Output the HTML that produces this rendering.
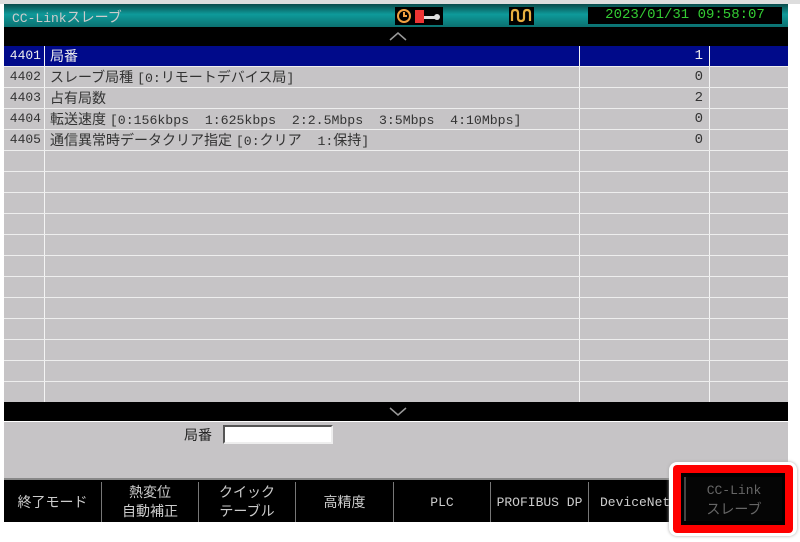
<!DOCTYPE html>
<html><head><meta charset="utf-8"><style>
*{margin:0;padding:0;box-sizing:border-box}
body{width:800px;height:542px;background:#fff;position:relative;overflow:hidden;font-family:"Liberation Sans","Noto Sans CJK JP",sans-serif}
.abs{position:absolute}
.m{font-family:"Liberation Mono",monospace;font-size:13.2px}
#title{left:4px;top:4px;width:784px;height:23px;background:linear-gradient(#0a4a4a,#0e9a9a 45%,#0b7070);}
#title span{position:absolute;left:8px;top:3px;color:#ccc;font-size:14px}
.blk{background:#000}
#dt{left:588px;top:7px;width:194px;height:17px;background:#000;color:#3c3;font-family:"Liberation Mono",monospace;font-size:14px;line-height:17px;text-align:center}
#grid{left:4px;top:46px;width:784px;height:356px;background:#c6c4c6}
.row{position:absolute;left:0;width:784px;height:21px;border-bottom:1px solid #eee;font-size:14px;color:#333;line-height:20px}
.row div{position:absolute;top:0;height:20px;border-right:1px solid #f4f4f4}
.c1{left:0;width:41px;text-align:right;padding-right:3px;font-family:"Liberation Mono",monospace;font-size:13px}
.c2{left:41px;width:535px;padding-left:5px;white-space:nowrap}
.c3{left:576px;width:130px;text-align:right;padding-right:6px;font-family:"Liberation Mono",monospace;font-size:14px}
.sel{background:#000a8a;color:#eee}
#panel{left:4px;top:422px;width:784px;height:56px;background:#c6c4c6}
#btns{left:4px;top:478px;width:784px;height:44px;background:#000;border-top:2px solid #888}
.b{position:absolute;top:2px;height:40px;color:#ccc;font-size:14px;text-align:center;display:flex;align-items:center;justify-content:center;line-height:19px;border-right:1px solid #777}
</style></head><body>
<div class="abs" style="left:0;top:0;width:800px;height:4px;background:#ddd"></div>
<div id="title" class="abs"><span><span class="m" style="position:static;font-size:13px">CC-Link</span>スレーブ</span></div>
<div class="abs blk" style="left:395px;top:7px;width:48px;height:18px"></div>
<svg class="abs" style="left:396px;top:8px" width="48" height="17"><circle cx="8" cy="8" r="6" fill="none" stroke="#f0a040" stroke-width="2"/><path d="M8 4V8H11" stroke="#f0a040" stroke-width="2" fill="none"/><rect x="19" y="2" width="9" height="13" fill="#e33"/><rect x="28" y="8" width="12" height="3" fill="#ddd"/><circle cx="41" cy="9" r="3" fill="#ddd"/></svg>
<div class="abs blk" style="left:509px;top:7px;width:25px;height:18px"></div>
<svg class="abs" style="left:510px;top:8px" width="24" height="16"><path d="M2 13V5Q2 2 5 2Q8 2 8 5V10Q8 13 11 13Q14 13 14 10V5Q14 2 17 2Q20 2 20 5V13" stroke="#e8b040" stroke-width="2.2" fill="none"/></svg>
<div id="dt" class="abs">2023/01/31 09:58:07</div>
<div class="abs blk" style="left:4px;top:27px;width:784px;height:19px"></div>
<svg class="abs" style="left:388px;top:30px" width="20" height="12"><path d="M2 10L10 3L18 10" stroke="#999" stroke-width="1.5" fill="none"/></svg>
<div id="grid" class="abs">
<div class="row sel" style="top:0"><div class="c1">4401</div><div class="c2">局番</div><div class="c3">1</div></div>
<div class="row" style="top:21px"><div class="c1">4402</div><div class="c2">スレーブ局種 <span class="m">[0:</span>リモートデバイス局<span class="m">]</span></div><div class="c3">0</div></div>
<div class="row" style="top:42px"><div class="c1">4403</div><div class="c2">占有局数</div><div class="c3">2</div></div>
<div class="row" style="top:63px"><div class="c1">4404</div><div class="c2">転送速度 <span class="m">[0:156kbps&nbsp;&nbsp;1:625kbps&nbsp;&nbsp;2:2.5Mbps&nbsp;&nbsp;3:5Mbps&nbsp;&nbsp;4:10Mbps]</span></div><div class="c3">0</div></div>
<div class="row" style="top:84px"><div class="c1">4405</div><div class="c2">通信異常時データクリア指定 <span class="m">[0:</span>クリア<span class="m">&nbsp;&nbsp;1:</span>保持<span class="m">]</span></div><div class="c3">0</div></div>
<div class="row" style="top:105px"><div class="c1"></div><div class="c2"></div><div class="c3"></div></div>
<div class="row" style="top:126px"><div class="c1"></div><div class="c2"></div><div class="c3"></div></div>
<div class="row" style="top:147px"><div class="c1"></div><div class="c2"></div><div class="c3"></div></div>
<div class="row" style="top:168px"><div class="c1"></div><div class="c2"></div><div class="c3"></div></div>
<div class="row" style="top:189px"><div class="c1"></div><div class="c2"></div><div class="c3"></div></div>
<div class="row" style="top:210px"><div class="c1"></div><div class="c2"></div><div class="c3"></div></div>
<div class="row" style="top:231px"><div class="c1"></div><div class="c2"></div><div class="c3"></div></div>
<div class="row" style="top:252px"><div class="c1"></div><div class="c2"></div><div class="c3"></div></div>
<div class="row" style="top:273px"><div class="c1"></div><div class="c2"></div><div class="c3"></div></div>
<div class="row" style="top:294px"><div class="c1"></div><div class="c2"></div><div class="c3"></div></div>
<div class="row" style="top:315px"><div class="c1"></div><div class="c2"></div><div class="c3"></div></div>
<div class="row" style="top:336px;border-bottom:none"><div class="c1"></div><div class="c2"></div><div class="c3"></div></div>
</div>
<div class="abs blk" style="left:4px;top:402px;width:784px;height:19px"></div>
<svg class="abs" style="left:388px;top:405px" width="20" height="12"><path d="M2 3L10 10L18 3" stroke="#999" stroke-width="1.5" fill="none"/></svg>
<div id="panel" class="abs"></div>
<div class="abs" style="left:184px;top:425px;font-size:14px;color:#222">局番</div>
<div class="abs" style="left:223px;top:425px;width:110px;height:19px;background:#fff;border:2px solid #555;border-right-color:#eee;border-bottom-color:#eee"></div>
<div id="btns" class="abs">
<div class="b" style="left:0;width:98px">終了モード</div>
<div class="b" style="left:98px;width:97px">熱変位<br>自動補正</div>
<div class="b" style="left:195px;width:97px">クイック<br>テーブル</div>
<div class="b" style="left:292px;width:98px">高精度</div>
<div class="b" style="left:390px;width:97px;font-family:'Liberation Mono',monospace;font-size:13px">PLC</div>
<div class="b" style="left:487px;width:98px;font-family:'Liberation Mono',monospace;font-size:13px">PROFIBUS DP</div>
<div class="b" style="left:585px;width:97px;font-family:'Liberation Mono',monospace;font-size:13px;border:none;justify-content:flex-start;padding-left:11px">DeviceNet</div>
</div>
<div class="abs" style="left:669px;top:462px;width:128px;height:74px;background:#fff;border-radius:8px;box-shadow:0 0 3px #aaa"></div>
<div class="abs" style="left:673px;top:465px;width:120px;height:68px;background:#f00;border-radius:4px"></div>
<div class="abs" style="left:681px;top:473px;width:104px;height:52px;background:#000"></div>
<div class="abs" style="left:684px;top:477px;width:98px;height:44px;background:#050505;border-left:2px solid #444;color:#666;font-size:14px;text-align:center;line-height:19px;padding-top:3px"><span style="font-family:'Liberation Mono',monospace;font-size:13px">CC-Link</span><br>スレーブ</div>
</body></html>
